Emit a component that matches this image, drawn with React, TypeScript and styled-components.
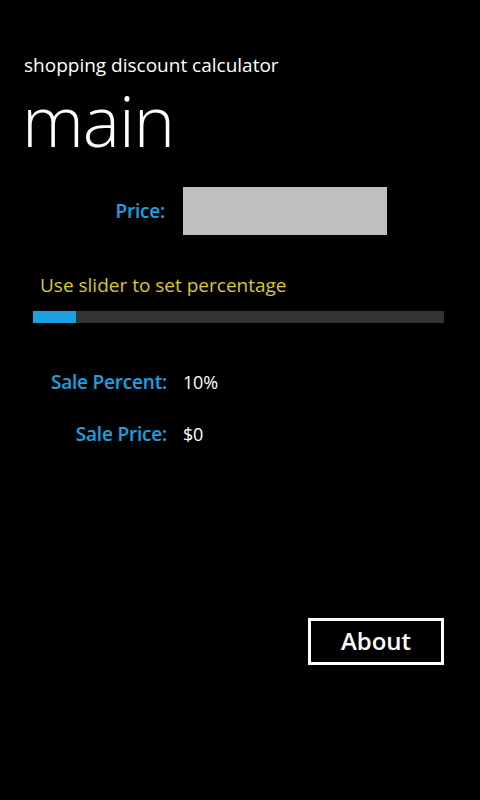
import React from "react";
import styled, { createGlobalStyle } from "styled-components";

const Global = createGlobalStyle`
  html, body { margin: 0; padding: 0; background: #000; }
  body { font-family: "Open Sans", "Noto Sans", sans-serif; color: #fff; }
`;

const Page = styled.div`
  width: 480px;
  height: 800px;
  background: #000;
  display: flex;
  flex-direction: column;
  box-sizing: border-box;
  padding-top: 52px;
`;

const AppTitle = styled.div`
  padding-left: 24px;
  font-size: 19px;
  line-height: 26px;
  letter-spacing: 0;
`;

const PageTitle = styled.div`
  padding-left: 22px;
  font-size: 70px;
  font-weight: 300;
  line-height: 80px;
  letter-spacing: -1px;
  margin-top: 2px;
`;

const FieldGrid = styled.div`
  display: grid;
  grid-template-columns: 167px 1fr;
  column-gap: 16px;
  align-items: center;
`;

const Label = styled.div`
  text-align: right;
  color: #1ba1e2;
  font-size: 19px;
  font-weight: 600;
  letter-spacing: -0.2px;
`;

const Value = styled.div`
  font-size: 18px;
  color: #fff;
  letter-spacing: -0.2px;
`;

const PriceRow = styled(FieldGrid)`
  margin-top: 27px;
`;

const PriceLabel = styled(Label)`
  padding-right: 2px;
`;

const PriceBox = styled.div`
  width: 204px;
  height: 48px;
  background: #bfbfbf;
`;

const Hint = styled.div`
  margin-top: 38px;
  padding-left: 40px;
  color: #d9c82c;
  font-size: 19px;
  line-height: 24px;
  letter-spacing: 0;
`;

const Track = styled.div`
  margin: 14px 0 0 33px;
  width: 411px;
  height: 12px;
  background: #333333;
  display: flex;
`;

const Fill = styled.div`
  height: 100%;
  background: #1ba1e2;
`;

const Results = styled(FieldGrid)`
  margin-top: 46px;
  row-gap: 26px;
  grid-auto-rows: 26px;
`;

const Footer = styled.div`
  margin-top: 171px;
  display: flex;
  justify-content: flex-end;
  padding-right: 36px;
`;

const Button = styled.button`
  width: 136px;
  height: 47px;
  box-sizing: border-box;
  border: 3px solid #fff;
  background: transparent;
  color: #fff;
  font-family: "Open Sans", "Noto Sans", sans-serif;
  font-size: 24px;
  font-weight: 600;
  padding: 0;
  padding-bottom: 2px;
  letter-spacing: 0;
`;

export default function App() {
  const percent = 10;
  return (
    <>
      <Global />
      <Page>
        <AppTitle>shopping discount calculator</AppTitle>
        <PageTitle>main</PageTitle>
        <PriceRow>
          <PriceLabel>Price:</PriceLabel>
          <PriceBox />
        </PriceRow>
        <Hint>Use slider to set percentage</Hint>
        <Track>
          <Fill style={{ width: `${(43 / 411) * 100}%` }} data-pct={percent} />
        </Track>
        <Results>
          <Label>Sale Percent:</Label>
          <Value>{percent}%</Value>
          <Label>Sale Price:</Label>
          <Value>$0</Value>
        </Results>
        <Footer>
          <Button>About</Button>
        </Footer>
      </Page>
    </>
  );
}
